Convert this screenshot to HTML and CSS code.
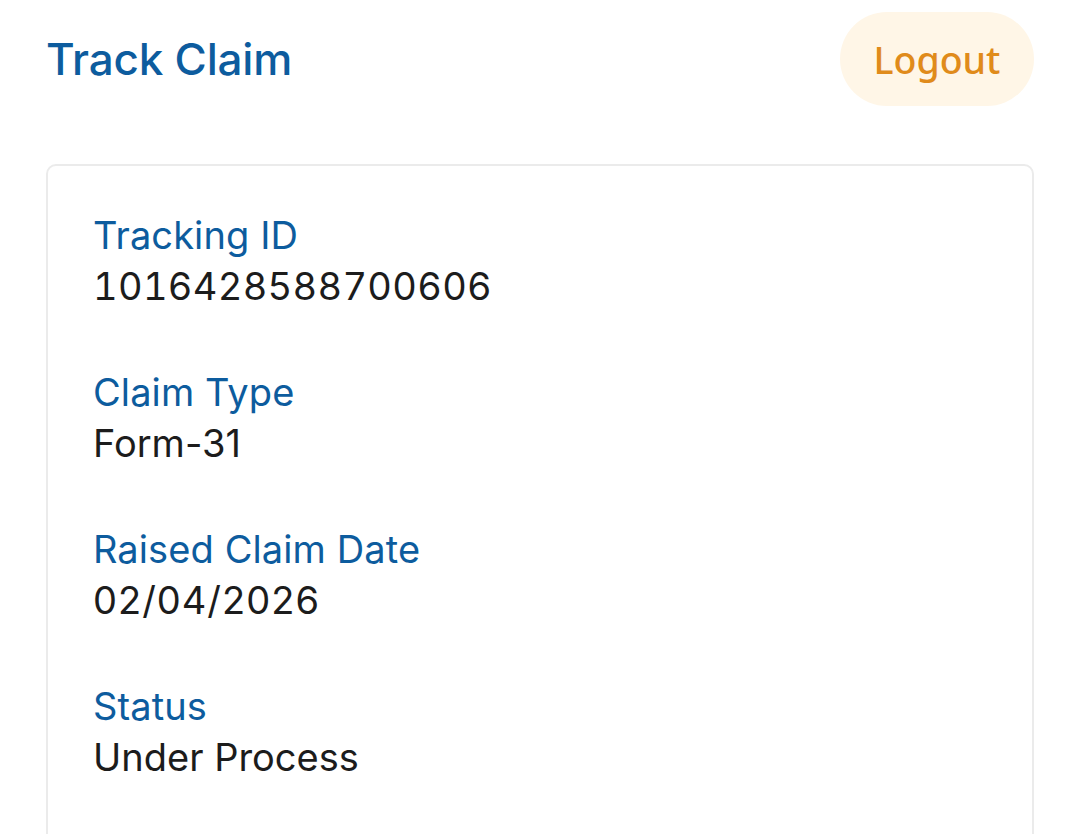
FILE: index.html
```
<!DOCTYPE html>
<html>
<head>
<meta charset="utf-8">
<link rel="stylesheet" href="styles.css">
</head>
<body>
<div class="page">
  <header class="header">
    <h1 class="title">Track Claim</h1>
    <button class="logout">Logout</button>
  </header>
  <section class="card">
    <div class="field">
      <div class="label">Tracking ID</div>
      <div class="value value--num">1016428588700606</div>
    </div>
    <div class="field">
      <div class="label">Claim Type</div>
      <div class="value">Form-31</div>
    </div>
    <div class="field">
      <div class="label">Raised Claim Date</div>
      <div class="value value--date">02/04/2026</div>
    </div>
    <div class="field">
      <div class="label">Status</div>
      <div class="value">Under Process</div>
    </div>
  </section>
</div>
</body>
</html>
```
FILE: styles.css
```
html, body {
  margin: 0;
  padding: 0;
  background: #ffffff;
}
body {
  font-family: Inter, "Noto Sans", sans-serif;
  width: 1080px;
  height: 834px;
  overflow: hidden;
}
.page {
  padding: 12px 46px 0 46px;
}
.header {
  display: flex;
  align-items: center;
  justify-content: space-between;
  height: 94px;
}
.title {
  margin: 0;
  font-size: 44px;
  font-weight: 500;
  color: #0d5c9e;
  letter-spacing: -0.2px;
}
.logout {
  width: 194px;
  height: 94px;
  border: none;
  border-radius: 47px;
  background: #fff6e7;
  color: #e08b1b;
  font-family: "Noto Sans", sans-serif;
  font-size: 37.5px;
  font-weight: 500;
  padding: 0;
}
.card {
  margin-top: 58px;
  border: 2px solid #ebebeb;
  border-radius: 10px;
  padding: 44px 45px 60px 45px;
  display: flex;
  flex-direction: column;
  gap: 55px;
  min-height: 700px;
}
.field {
  display: flex;
  flex-direction: column;
}
.label {
  font-size: 38px;
  line-height: 51px;
  color: #0d5c9e;
  font-weight: 400;
  letter-spacing: 0.1px;
}
.value {
  font-size: 38px;
  line-height: 51px;
  color: #1c1c1c;
  font-weight: 400;
}
.value--num {
  font-variant-numeric: tabular-nums;
  letter-spacing: 0.3px;
}
.value--date {
  letter-spacing: 1px;
}
```
